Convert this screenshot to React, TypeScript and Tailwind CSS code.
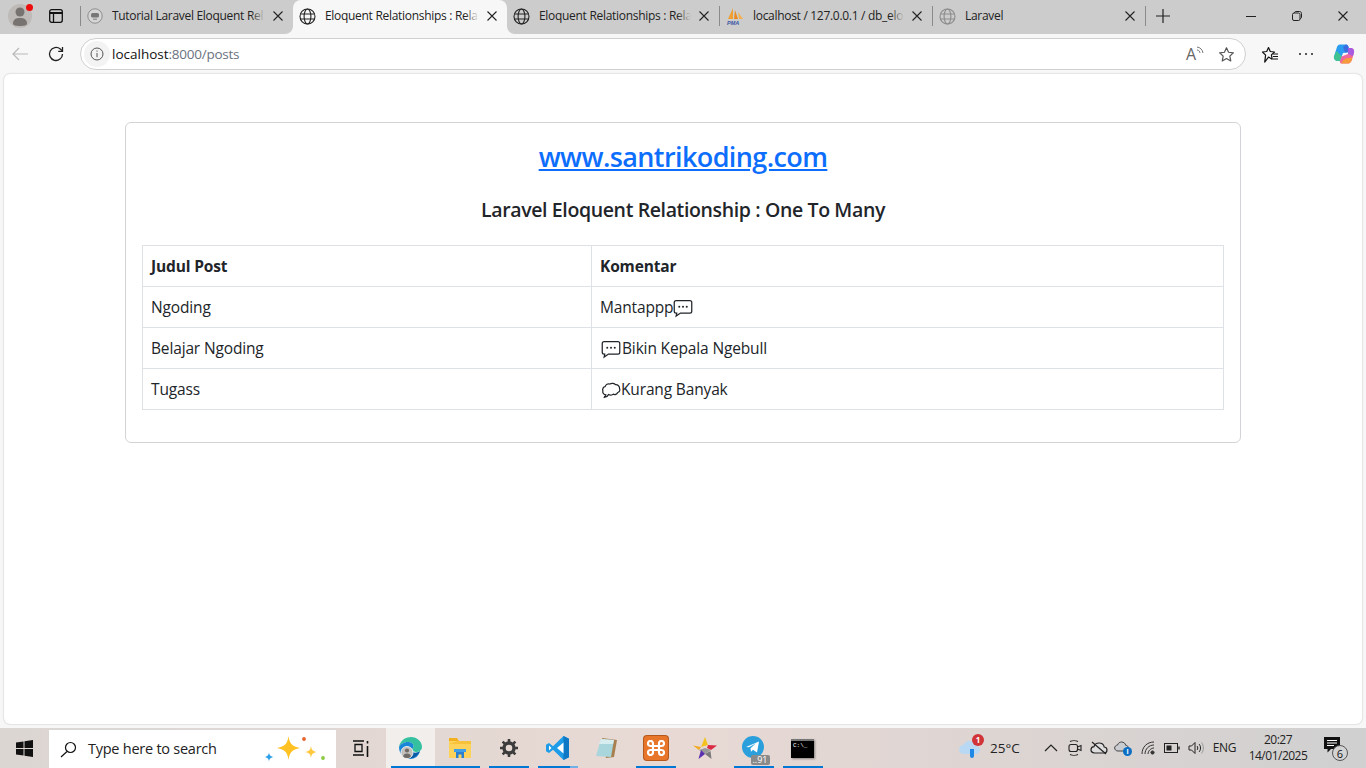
import React from "react";

const ui = { fontFamily: '"Open Sans", "Noto Sans", sans-serif' };

function Globe({ color = "#222" }: { color?: string }) {
  return (
    <svg width="17" height="17" viewBox="0 0 17 17" fill="none" stroke={color} strokeWidth="1.1" className="shrink-0">
      <circle cx="8.5" cy="8.5" r="7.5" />
      <ellipse cx="8.5" cy="8.5" rx="3.4" ry="7.5" />
      <path d="M1.5 6h14M1.5 11h14" />
    </svg>
  );
}

function CloseX({ size = 10, color = "#222" }: { size?: number; color?: string }) {
  return (
    <svg width={size} height={size} viewBox="0 0 10 10" stroke={color} strokeWidth="1.1" className="shrink-0">
      <path d="M0.5 0.5l9 9M9.5 0.5l-9 9" />
    </svg>
  );
}

function Copilot() {
  return (
    <svg width="22" height="22" viewBox="0 0 22 22">
      <path d="M7 1.5h6c1.5 0 2 1 2.5 2.5L17 9l-7 1-3 8H5C2.5 18 .5 16 1 13.5L4 4c.5-1.5 1.5-2.500 3-2.500z" fill="#2a9df0" />
      <path d="M13 1.500c1.500 0 2 1 2.500 2.500L17 9l-5 .5L10 4z" fill="#3b6fe0" />
      <path d="M15 5h2.500c2.500 0 4 2 3.500 4.500l-2 7c-.5 2-2 4-4 4H8.500C7 20.500 6.500 19 7 17.500l1.500-4L15 11z" fill="#f0679e" />
      <path d="M8 20.500h7c2 0 3.500-2 4-4l.5-2-7 1-2.500 2z" fill="#f59b3c" />
      <path d="M3.500 8L1 13.500C.5 16 2.500 18 5 18h2l1.500-5z" fill="#3fc28f" />
      <path d="M15 5h2.500c2.500 0 4 2 3.500 4.500L20 13l-5-2z" fill="#a75be0" />
    </svg>
  );
}

function PmaLogo() {
  return (
    <svg width="18" height="17" viewBox="0 0 18 17" className="shrink-0">
      <path d="M7 0L2 11h5z" fill="#f0a030" />
      <path d="M9 2l-1 9h4z" fill="#e88a20" />
      <path d="M12 4l1 7h4z" fill="#f3b050" />
      <text x="1" y="16.500" fontSize="5.500" fontWeight="700" fontStyle="italic" fill="#3a55a5" fontFamily="Liberation Sans">PMA</text>
    </svg>
  );
}

function Tab({
  title, icon, active, width, fade,
}: { title: string; icon: React.ReactNode; active?: boolean; width: string; fade?: boolean }) {
  return (
    <div
      className={`relative flex h-[34px] shrink-0 items-center pb-[2px] pl-[6px] pr-[10px] ${width} ${active ? "rounded-t-[8px] bg-[#f7f7f7]" : ""}`}
    >
      {active ? (
        <>
          <svg width="8" height="8" viewBox="0 0 8 8" className="absolute bottom-0 left-[-8px]" fill="#f7f7f7"><path d="M8 0v8H0c4 0 8-3 8-8z" /></svg>
          <svg width="8" height="8" viewBox="0 0 8 8" className="absolute bottom-0 right-[-8px]" fill="#f7f7f7"><path d="M0 0v8h8C4 8 0 5 0 0z" /></svg>
        </>
      ) : null}
      {icon}
      <div className="relative ml-[9px] flex-1 overflow-hidden whitespace-nowrap text-[12px] text-[#222] tracking-[-0.3px]">
        {title}
        {fade ? <div className={`absolute right-0 top-0 h-full w-[14px] bg-gradient-to-r from-transparent ${active ? "to-[#f7f7f7]" : "to-[#cccccc]"}`} /> : null}
      </div>
      <div className="ml-[8px] flex w-[10px] items-center justify-center"><CloseX /></div>
    </div>
  );
}

function Sep() {
  return <div className="mb-[2px] h-[20px] w-px shrink-0 bg-[#8a8a8a]" />;
}

function TitleBar() {
  return (
    <div className="flex h-[34px] items-center bg-[#cccccc]">
      <div className="relative mb-[2px] ml-[8px] flex h-[24px] w-[24px] items-center justify-center rounded-full bg-[#bdbab8]">
        <svg width="18" height="20" viewBox="0 0 18 20" fill="#777370">
          <circle cx="9" cy="6" r="4.500" />
          <path d="M2 18c0-5 3-6 7-6s7 1 7 6c0 1-3 2-7 2s-7-1-7-2z" />
        </svg>
        <div className="absolute right-[-1px] top-0 h-[7px] w-[7px] rounded-full bg-[#ee0d0d]" />
      </div>
      <div className="mb-[2px] ml-[17px] flex w-[14px] items-center">
        <svg width="14" height="14" viewBox="0 0 14 14" fill="none" stroke="#111" strokeWidth="1.300">
          <rect x="0.700" y="0.700" width="12.600" height="12.600" rx="2" />
          <path d="M0.700 4h12.600" strokeWidth="2" />
          <path d="M4.500 4v9" />
        </svg>
      </div>
      <div className="ml-[17px] flex"><Sep /></div>
      <Tab
        title="Tutorial Laravel Eloquent Rel"
        width="w-[212px]"
        fade
        icon={
          <svg width="16" height="16" viewBox="0 0 16 16" className="shrink-0">
            <circle cx="8" cy="8" r="7.200" fill="#d6d6d6" stroke="#8e8e8e" />
            <rect x="4" y="5" width="8" height="4.500" rx="1.500" fill="#777" />
            <path d="M6 10.500h4v1.500H6z" fill="#999" />
          </svg>
        }
      />
      <Tab title="Eloquent Relationships : Rela" width="w-[214px]" active fade icon={<Globe />} />
      <Tab title="Eloquent Relationships : Rela" width="w-[212px]" fade icon={<Globe />} />
      <Sep />
      <Tab title="localhost / 127.0.0.1 / db_elo" width="w-[212px]" fade icon={<PmaLogo />} />
      <Sep />
      <Tab title="Laravel" width="w-[212px]" icon={<Globe color="#8c8c8c" />} />
      <Sep />
      <div className="mb-[2px] ml-[10px] flex w-[14px] items-center justify-center">
        <svg width="14" height="14" viewBox="0 0 14 14" stroke="#222" strokeWidth="1.200"><path d="M7 0v14M0 7h14" /></svg>
      </div>
      <div className="mb-[2px] ml-auto flex items-center">
        <div className="flex w-[46px] justify-center">
          <svg width="10" height="10" viewBox="0 0 10 10" stroke="#222" strokeWidth="1"><path d="M0 5.500h10" /></svg>
        </div>
        <div className="flex w-[46px] justify-center">
          <svg width="10" height="10" viewBox="0 0 10 10" fill="none" stroke="#222" strokeWidth="1">
            <rect x="0.500" y="2" width="7.500" height="7.500" rx="1.500" />
            <path d="M2.500 2c0-1 .5-1.500 1.500-1.500h3.500c1.200 0 2 .8 2 2V6c0 1-.5 1.500-1.500 1.500" />
          </svg>
        </div>
        <div className="flex w-[46px] justify-center"><CloseX /></div>
      </div>
    </div>
  );
}

function Toolbar() {
  return (
    <div className="flex h-[40px] items-center bg-[#f7f7f7]">
      <div className="ml-[12px] flex w-[16px] items-center">
        <svg width="16" height="14" viewBox="0 0 16 14" fill="none" stroke="#b9b9b9" strokeWidth="1.200"><path d="M16 7H1M7 1L1 7l6 6" /></svg>
      </div>
      <div className="ml-[20px] flex w-[16px] items-center">
        <svg width="16" height="16" viewBox="0 0 16 16" fill="none" stroke="#222" strokeWidth="1.300">
          <path d="M14.500 8A6.500 6.500 0 1 1 12.300 3.100L14.500 5" />
          <path d="M14.500 1v4.300h-4.300" />
        </svg>
      </div>
      <div className="ml-[16px] flex h-[32px] flex-1 items-center rounded-full border border-[#d0d0d0] bg-white pl-[3px] pr-[10px]">
        <div className="flex h-[26px] w-[26px] items-center justify-center rounded-full bg-[#f3f3f3]">
          <svg width="14" height="14" viewBox="0 0 14 14" fill="none" stroke="#555" strokeWidth="1">
            <circle cx="7" cy="7" r="6" />
            <path d="M7 6v4.200M7 3.500v1.200" />
          </svg>
        </div>
        <div className="ml-[2px] text-[13.5px]">
          <span className="text-[#111]">localhost</span>
          <span className="tracking-[-0.25px] text-[#6b7280]">:8000/posts</span>
        </div>
        <div className="ml-auto flex items-center gap-[14px]">
          <span className="flex w-[18px] items-center">
            <span className="text-[16px] leading-none text-[#666]">A</span>
            <svg width="8" height="11" viewBox="0 0 8 11" fill="none" stroke="#666" strokeWidth="0.900" className="mb-[5px]"><path d="M1 1c3 0 6 3 6 6M1 4c2 0 3 1.500 3 3" /></svg>
          </span>
          <svg width="17" height="17" viewBox="0 0 24 24" fill="none" stroke="#555" strokeWidth="1.700" strokeLinejoin="round">
            <path d="M12 2.500l2.900 6.300 6.800.8-5 4.700 1.300 6.800-6-3.400-6 3.400 1.300-6.800-5-4.700 6.800-.8z" />
          </svg>
        </div>
      </div>
      <div className="ml-[15px] flex w-[18px] items-center">
        <svg width="18" height="17" viewBox="0 0 18 17" fill="none" stroke="#111" strokeWidth="1.200" strokeLinejoin="round">
          <path d="M7.500 1.500l1.800 4 4.200.5-3.100 2.900.8 4.300-3.700-2.100-3.800 5 .9-6.900L1.500 6l4.200-.5z" />
          <path d="M12 8h5M12 10.500h5M12 13h5" />
        </svg>
      </div>
      <div className="ml-[20px] flex w-[14px] items-center justify-between">
        <span className="h-[2px] w-[2px] rounded-full bg-[#222]" />
        <span className="h-[2px] w-[2px] rounded-full bg-[#222]" />
        <span className="h-[2px] w-[2px] rounded-full bg-[#222]" />
      </div>
      <div className="ml-[20px] mr-[11px] flex w-[22px] items-center"><Copilot /></div>
    </div>
  );
}

const BubbleDots = () => (
  <svg width="20" height="20" viewBox="0 0 16 16" fill="none" stroke="#212529" strokeWidth="1" className="shrink-0">
    <path d="M2.500 2h11A1.500 1.500 0 0 1 15 3.500v7a1.500 1.500 0 0 1-1.500 1.500H6l-3.500 2.500.5-2.500h-.5A1.500 1.500 0 0 1 1 10.500v-7A1.500 1.500 0 0 1 2.500 2z" />
    <circle cx="5" cy="7" r=".8" fill="#212529" stroke="none" />
    <circle cx="8" cy="7" r=".8" fill="#212529" stroke="none" />
    <circle cx="11" cy="7" r=".8" fill="#212529" stroke="none" />
  </svg>
);

const BubbleCloud = () => (
  <svg width="20" height="20" viewBox="0 0 16 16" fill="none" stroke="#212529" strokeWidth="1" className="shrink-0">
    <path d="M2.500 14L4 11.800C2.300 11.700 1 10.500 1.500 8.800 .8 7 2 5.500 3.300 5.300 3.800 3.500 5.500 2.700 7 3.200 8.500 2.300 10.800 2.500 11.700 3.800 13.500 3.700 15 5 14.800 6.700 15.500 8 14.800 9.800 13.300 10 12.800 11.500 11 12 9.800 11.300 8.500 12.300 7 12.300 6.200 11.500 5.500 12.800 4 13.800 2.500 14z" strokeLinejoin="round" />
  </svg>
);

function Page() {
  const td = "border border-[#dee2e6] h-[41px] px-[8px] pt-[2px] align-middle tracking-[-0.15px]";
  return (
    <div className="mx-[4px] h-[650px] rounded-[6px] bg-white pt-[48px] shadow-[0_0_2px_rgba(0,0,0,0.25)]">
      <div className="mx-auto h-[321px] w-[1116px] rounded-[6px] border border-[#d2d4d7] px-[16px] pt-[15px]">
        <h3 className="h-[37px] text-center text-[27px] leading-[37px] font-semibold tracking-[-0.6px]">
          <a className="text-[#0d6efd] underline">www.santrikoding.com</a>
        </h3>
        <h5 className="mt-[21px] h-[27px] text-center text-[19.5px] leading-[27px] font-semibold tracking-[-0.37px] text-[#212529]">
          Laravel Eloquent Relationship : One To Many
        </h5>
        <table className="mt-[22px] w-[1082px] table-fixed border-collapse text-[15.5px] text-[#212529]">
          <colgroup>
            <col className="w-[449px]" />
            <col />
          </colgroup>
          <tbody>
            <tr>
              <td className={`${td} font-bold`}>Judul Post</td>
              <td className={`${td} font-bold`}>Komentar</td>
            </tr>
            <tr>
              <td className={td}>Ngoding</td>
              <td className={td}><div className="flex items-center">Mantappp<BubbleDots /></div></td>
            </tr>
            <tr>
              <td className={td}>Belajar Ngoding</td>
              <td className={td}><div className="flex items-center"><span className="ml-[1px]"><BubbleDots /></span><span className="ml-[1px]">Bikin Kepala Ngebull</span></div></td>
            </tr>
            <tr>
              <td className={td}>Tugass</td>
              <td className={td}><div className="flex items-center"><span className="ml-[1px]"><BubbleCloud /></span><span>Kurang Banyak</span></div></td>
            </tr>
          </tbody>
        </table>
      </div>
    </div>
  );
}

function TaskSlot({ children, bar, active, partial, wide }: { children: React.ReactNode; bar?: boolean; active?: boolean; partial?: boolean; wide?: boolean }) {
  return (
    <div className={`relative flex h-[40px] shrink-0 items-center justify-center ${wide ? "w-[50px]" : "w-[49px]"} ${active ? "bg-[#f2eeec]" : ""}`}>
      {children}
      {bar ? <div className={`absolute bottom-0 left-[5px] h-[2px] ${active ? "left-0 w-full" : "w-[40px]"} bg-[#0078d4]`} /> : null}
      {partial ? <div className="absolute bottom-0 right-[4px] h-[2px] w-[8px] bg-[#6fb1e6]" /> : null}
    </div>
  );
}

function Tray({ children, w }: { children: React.ReactNode; w: string }) {
  return <div className={`flex items-center justify-center ${w}`}>{children}</div>;
}

function Taskbar() {
  return (
    <div className="mt-[4px] flex h-[40px] items-center bg-gradient-to-r from-[#dcd6d2] via-[#e8d9d4] to-[#d0d0d0]" >
      <div className="flex w-[49px] justify-center">
        <svg width="17" height="17" viewBox="0 0 17 17" fill="#111">
          <path d="M0 2.500l7.500-1v6.500H0zM8.500 1.300L17 0v8H8.500zM0 9h7.500v6.500l-7.500-1zM8.500 9H17v8l-8.500-1.300z" />
        </svg>
      </div>
      <div className="flex h-[39px] w-[287px] items-center self-end border-t border-[#d8d8d8] bg-white">
        <div className="ml-[11px] flex w-[18px]">
          <svg width="17" height="17" viewBox="0 0 17 17" fill="none" stroke="#111" strokeWidth="1.200">
            <circle cx="10.500" cy="6.500" r="5" />
            <path d="M7 10.500L1 16" />
          </svg>
        </div>
        <span className="ml-[10px] text-[14.5px] text-[#222] tracking-[-0.25px]">Type here to search</span>
        <svg width="62" height="30" viewBox="0 0 62 30" className="ml-auto mr-[9px]">
          <path d="M23.500 2c1 7.500 3.500 10.500 11.500 12-8 1.500-10.500 4.500-11.500 12-1-7.500-3.500-10.500-11.500-12 8-1.500 10.500-4.500 11.500-12z" fill="#ffc222" />
          <path d="M46 12c.5 3.700 1.800 5.500 6 6-4.200.5-5.500 2.300-6 6-.5-3.700-1.800-5.500-6-6 4.200-.5 5.500-2.300 6-6z" fill="#ffc83d" />
          <path d="M4 18.500c.4 2.500 1.200 3.800 4.500 4.500C5.200 23.700 4.400 25 4 27.500 3.600 25 2.800 23.700-.5 23c3.300-.7 4.100-2 4.500-4.500z" fill="#2b9fe8" />
          <circle cx="39" cy="5" r="1.900" fill="#e8622c" />
          <circle cx="58" cy="24" r="1.900" fill="#8bc93f" />
        </svg>
      </div>
      <TaskSlot wide>
        <svg width="18" height="18" viewBox="0 0 18 18" fill="none" stroke="#111" strokeWidth="1.300">
          <path d="M1 2h11M1 16h11M3 5.500h7v7H3z" />
          <path d="M15.500 2v2.500M15.500 7v11" strokeWidth="1.600" />
        </svg>
      </TaskSlot>
      <TaskSlot bar active>
        <svg width="25" height="24" viewBox="0 0 25 24">
          <path d="M1 11C2 5 7 1 13 1c6 0 11 4.500 11 10 0 3.500-3 5-6 5-2 0-4-1-4-2.500 0-1 1.500-1.500 1.500-3.500C15.500 7 12 5.500 8.500 6 5 6.500 2 8.500 1 11z" fill="#35c1a0" />
          <path d="M1 11c1-2.500 4-4.500 7.500-5 3.500-.5 7 1 7 4 0 2-1.500 2.500-1.500 3.500C14 18 20 17 22 15c-1 5-5 8-10 8C6 23 1 18 1 11z" fill="#1a86d8" />
          <path d="M9 22c5 1.500 10-1 13-7-2 2-5 2.500-8 1.500-2 .5-4 3-5 5.500z" fill="#0c59a4" />
          <circle cx="9" cy="16.500" r="6" fill="#c3bfbc" stroke="#f2eeec" />
          <circle cx="9" cy="14.500" r="2.100" fill="#6f6a67" />
          <path d="M5.200 20.500c0-2 1.700-3 3.800-3s3.800 1 3.800 3c-1 1-2.400 1.500-3.800 1.500s-2.800-.5-3.800-1.500z" fill="#6f6a67" />
        </svg>
      </TaskSlot>
      <TaskSlot bar>
        <svg width="24" height="22" viewBox="0 0 24 22">
          <path d="M1 1h8l2 3H1z" fill="#f2b01e" />
          <path d="M1 4h22v17H1z" fill="#fcd25a" />
          <path d="M1 7l9-3h13v3z" fill="#f7c23a" />
          <path d="M8 14h8v7h-2.500v-3.500h-3V21H8z" fill="#2a7fd0" />
          <path d="M6 12h12v3H6z" fill="#3fa0ea" />
        </svg>
      </TaskSlot>
      <TaskSlot bar>
        <svg width="20" height="20" viewBox="0 0 20 20" fill="none">
          <circle cx="10" cy="10" r="5" stroke="#3c3c3c" strokeWidth="3.400" />
          <path d="M10 1v3M10 16v3M1 10h3M16 10h3M3.600 3.600l2.100 2.100M14.300 14.300l2.100 2.100M3.600 16.400l2.100-2.100M14.300 5.700l2.100-2.100" stroke="#3c3c3c" strokeWidth="2.600" />
        </svg>
      </TaskSlot>
      <TaskSlot bar partial>
        <svg width="24" height="24" viewBox="0 0 24 24">
          <path d="M17.500 0L23 2.700v18.600L17.500 24 7 13.800l-4 3.100L0 15.300V8.700l3-1.600 4 3.100z" fill="#1e9ce8" />
          <path d="M17.500 0L23 2.700v18.600L17.500 24z" fill="#0f78c4" />
          <path d="M17.500 6.500L11 12l6.500 5.500z" fill="#fff" />
          <path d="M3 9.500v5L5.500 12z" fill="#fff" />
        </svg>
      </TaskSlot>
      <TaskSlot>
        <svg width="24" height="24" viewBox="0 0 24 24">
          <path d="M7 2l15 2-3 17-8 1z" fill="#a87f4e" />
          <path d="M6 3l13 1-3 17L1 20z" fill="#a8d6dc" />
          <path d="M6 3l13 1-1 4L4 8z" fill="#d8edef" />
        </svg>
      </TaskSlot>
      <TaskSlot bar>
        <div className="flex h-[24px] w-[24px] items-center justify-center rounded-[3px] bg-[#e8762a] ring-1 ring-[#b4581c]">
          <svg width="18" height="16" viewBox="0 0 18 16" fill="none" stroke="#fff" strokeWidth="2.200">
            <path d="M6 3.500C6 2 5 1 3.500 1S1 2 1 3.500 2 6 3.500 6h11C16 6 17 5 17 3.500S16 1 14.500 1 12 2 12 3.500v9c0 1.500 1 2.500 2.500 2.500s2.500-1 2.500-2.500S16 10 14.500 10h-11C2 10 1 11 1 12.500S2 15 3.500 15 6 14 6 12.500z" />
          </svg>
        </div>
      </TaskSlot>
      <TaskSlot>
        <svg width="24" height="24" viewBox="0 0 24 24">
          <path d="M12 1l3 8-7 2z" fill="#f4c21f" />
          <path d="M15 9l9 .5-6 4.500-4-2z" fill="#d92c44" />
          <path d="M0 9.500L8 11l-2 3z" fill="#f2a81f" />
          <path d="M6 14l6-2 6 2-6 4z" fill="#9a9a9a" />
          <path d="M12 18l6.500 5-1-8z" fill="#7a7a7a" />
          <path d="M12 18l-6.500 5L8 14z" fill="#5a2fb0" />
        </svg>
      </TaskSlot>
      <TaskSlot bar>
        <div className="relative h-[24px] w-[24px]">
          <svg width="22" height="22" viewBox="0 0 22 22">
            <circle cx="11" cy="11" r="11" fill="#2a9fdc" />
            <path d="M4 11l13-5.500-2 11-4-2.800-2 2-.5-3.500 5.500-5-7 4z" fill="#fff" />
          </svg>
          <div className="absolute bottom-[-5px] left-[9px] rounded-[2px] bg-[#8a8a8a] px-[2px] text-[9px] leading-[10px] text-white">..91</div>
        </div>
      </TaskSlot>
      <TaskSlot bar>
        <div className="h-[19px] w-[23px] border-t-[2px] border-[#777] bg-black pl-[2px] text-[6px] leading-[9px] text-white shadow-[1px_1px_2px_rgba(0,0,0,0.4)]" style={{ fontFamily: '"Liberation Mono", monospace' }}>C:\_</div>
      </TaskSlot>

      <div className="ml-auto flex items-center">
        <div className="relative mr-[7px] flex h-[24px] w-[26px] items-center">
          <svg width="24" height="22" viewBox="0 0 24 22">
            <path d="M7 17c-3 0-5-2-5-4.500S4 8 6.500 8C7.500 5 10 4 12.500 4c3.500 0 6 2.500 6.500 5 2.500 0 4 1.500 4 4s-2 4-4.500 4z" fill="#b9d8f4" />
            <path d="M13 12h4v7a2 2 0 0 1-4 0z" fill="#1e88e5" />
          </svg>
          <div className="absolute right-[-1px] top-[-2px] flex h-[12px] w-[12px] items-center justify-center rounded-full bg-[#d13438] text-[8px] font-bold leading-none text-white">1</div>
        </div>
        <span className="w-[48px] text-[13.5px] text-[#222]">25°C</span>
        <Tray w="w-[24px] ml-[1px]">
          <svg width="14" height="8" viewBox="0 0 14 8" fill="none" stroke="#222" strokeWidth="1.200"><path d="M1 7l6-6 6 6" /></svg>
        </Tray>
        <Tray w="w-[24px]">
          <svg width="14" height="16" viewBox="0 0 14 16" fill="none" stroke="#222" strokeWidth="1.100">
            <path d="M2 1.500c2-1 6-1 8 0M2 14.500c2 1 6 1 8 0" />
            <rect x="1" y="4.500" width="8.500" height="7" rx="2" />
            <path d="M9.500 7l3.500-1.500v5L9.500 9" />
          </svg>
        </Tray>
        <Tray w="w-[24px]">
          <svg width="18" height="14" viewBox="0 0 18 14" fill="none" stroke="#222" strokeWidth="1.200">
            <path d="M4.500 12C2.500 12 1 10.500 1 8.800S2.300 5.700 4 5.600C4.700 3.300 6.800 2 9 2c2.800 0 4.800 1.800 5.200 4 1.600.2 2.800 1.400 2.800 3s-1.200 3-3 3z" fill="#ddd" />
            <path d="M2 1l14 12" />
          </svg>
        </Tray>
        <Tray w="w-[24px]">
          <div className="relative h-[16px] w-[18px]">
            <svg width="15" height="11" viewBox="0 0 15 11" fill="#c9ccd0" stroke="#444" strokeWidth="1" className="absolute left-0 top-[1px]">
              <path d="M4 10C2 10 .7 8.700.7 7S2 4.200 3.500 4.100C4.200 2 5.800 1 7.500 1c2.200 0 4 1.500 4.200 3.300 1.600.1 2.700 1.200 2.700 2.800S13 10 11.300 10z" />
            </svg>
            <div className="absolute bottom-0 right-0 flex h-[9px] w-[9px] items-center justify-center rounded-full bg-[#0a6fc4] text-[7px] font-bold leading-none text-white">i</div>
          </div>
        </Tray>
        <Tray w="w-[24px] ml-[1px]">
          <svg width="14" height="14" viewBox="0 0 14 14" fill="none" stroke="#333" strokeWidth="1">
            <path d="M1 13C1 6 6 1 13 1M4 13c0-5 4-9 9-9M7 13c0-3 3-6 6-6" />
            <circle cx="11.500" cy="11.500" r="1.600" fill="#333" />
          </svg>
        </Tray>
        <Tray w="w-[24px]">
          <svg width="16" height="10" viewBox="0 0 16 10" fill="none" stroke="#222">
            <rect x="0.500" y="0.500" width="13" height="9" />
            <rect x="2.500" y="2.500" width="5" height="5" fill="#222" stroke="none" />
            <path d="M15 3.500v3" strokeWidth="1.400" />
          </svg>
        </Tray>
        <Tray w="w-[24px]">
          <svg width="16" height="14" viewBox="0 0 16 14" fill="none" stroke="#222" strokeWidth="1">
            <path d="M1 5h2.500L7 1.500v11L3.500 9H1z" />
            <path d="M9 5c1 1 1 3 0 4M11 3c2 2 2 6 0 8" />
            <path d="M13.500 1.500c2.500 3 2.500 8 0 11" stroke="#999" />
          </svg>
        </Tray>
        <span className="w-[33px] text-center text-[12px] text-[#222] tracking-[-0.3px]">ENG</span>
        <div className="ml-[3px] flex w-[68px] flex-col items-center text-[12px] leading-[16px] tracking-[-0.5px] text-[#222]">
          <span>20:27</span>
          <span>14/01/2025</span>
        </div>
        <div className="relative ml-[12px] mr-[18px] h-[24px] w-[24px]">
          <svg width="18" height="18" viewBox="0 0 18 18" className="absolute left-0 top-[1px]">
            <path d="M0 0h16v12H7l-3.500 3.500V12H0z" fill="#111" />
            <path d="M3 3.500h10M3 6h10M3 8.500h7" stroke="#fff" strokeWidth="1" />
          </svg>
          <div className="absolute bottom-[-1px] right-0 flex h-[16px] w-[16px] items-center justify-center rounded-full border border-[#555] bg-[#d4d4d4] text-[11px] leading-none text-[#111]">6</div>
        </div>
      </div>
    </div>
  );
}

export default function App() {
  return (
    <div className="h-[768px] w-[1366px] overflow-hidden bg-[#f7f7f7]" style={ui}>
      <TitleBar />
      <Toolbar />
      <Page />
      <Taskbar />
    </div>
  );
}
